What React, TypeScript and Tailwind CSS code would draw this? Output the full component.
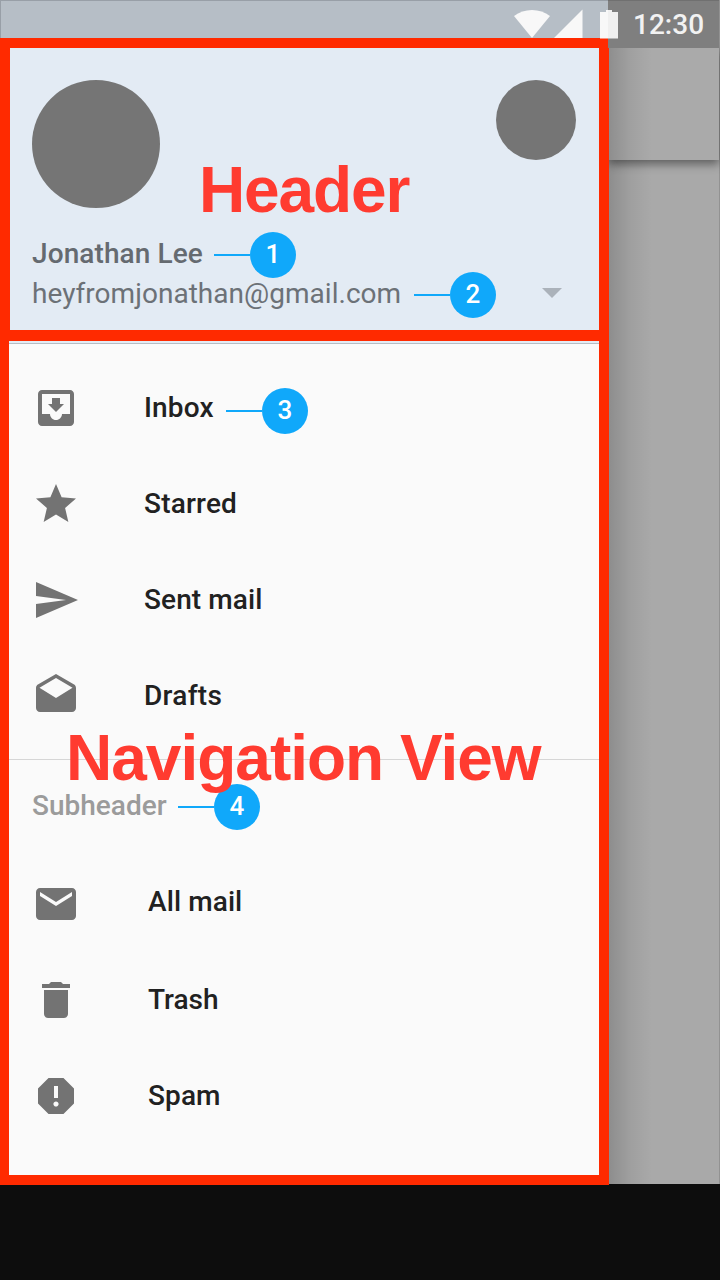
import React from "react";

const ICONS = {
  inbox:
    "M19 3H4.99c-1.11 0-1.98.9-1.98 2L3 19c0 1.1.88 2 1.99 2H19c1.1 0 2-.9 2-2V5c0-1.1-.9-2-2-2zm0 12h-4c0 1.66-1.35 3-3 3s-3-1.34-3-3H4.99V5H19v10zm-3-5h-2V7h-4v3H8l4 4 4-4z",
  star: "M12 17.27L18.18 21l-1.64-7.03L22 9.24l-7.19-.61L12 2 9.19 8.63 2 9.24l5.46 4.73L5.82 21z",
  send: "M2.01 21L23 12 2.01 3 2 10l15 2-15 2z",
  drafts:
    "M21.99 8c0-.72-.37-1.35-.94-1.7L12 1 2.95 6.3C2.38 6.65 2 7.28 2 8v10c0 1.1.9 2 2 2h16c1.1 0 2-.9 2-2l-.01-10zM12 13L3.74 7.84 12 3l8.26 4.84L12 13z",
  mail: "M20 4H4c-1.1 0-1.99.9-1.99 2L2 18c0 1.1.9 2 2 2h16c1.1 0 2-.9 2-2V6c0-1.1-.9-2-2-2zm0 4l-8 5-8-5V6l8 5 8-5v2z",
  trash: "M6 19c0 1.1.9 2 2 2h8c1.1 0 2-.9 2-2V7H6v12zM19 4h-3.5l-1-1h-5l-1 1H5v2h14V4z",
  spam: "M15.73 3H8.27L3 8.27v7.46L8.27 21h7.46L21 15.73V8.27L15.73 3zM12 17.3c-.72 0-1.3-.58-1.3-1.3s.58-1.3 1.3-1.3 1.3.58 1.3 1.3-.58 1.3-1.3 1.3zm1-4.3h-2V7h2v6z",
};

type IconName = keyof typeof ICONS;

function Icon({ name }: { name: IconName }) {
  return (
    <svg className="h-12 w-12 shrink-0 fill-[#737373]" viewBox="0 0 24 24">
      <path d={ICONS[name]} />
    </svg>
  );
}

function Callout({ n, className }: { n: number; className: string }) {
  return (
    <div className={`absolute flex h-[46px] items-center ${className}`}>
      <div className="h-0.5 w-9 bg-[#10a8fa]" />
      <div className="mb-px flex h-[46px] w-[46px] shrink-0 items-center justify-center rounded-full bg-[#10a8fa] pb-px text-[26px] leading-none font-medium text-white">
        {n}
      </div>
    </div>
  );
}

function Item({ icon, label, className, callout }: { icon: IconName; label: string; className: string; callout?: React.ReactNode }) {
  return (
    <li className="relative flex h-24 items-center pl-8">
      <Icon name={icon} />
      <span className={`text-[28px] leading-8 font-medium text-[#212121] ${className}`}>{label}</span>
      {callout}
    </li>
  );
}

function StatusIcons() {
  return (
    <svg className="absolute top-0 left-[508px] z-20 h-12 w-[120px]" viewBox="508 0 120 48">
      <path d="M532 38L514 16C524 8 540 8 550 16Z" fill="#f8f8f8" />
      <path d="M554 38H582.500V9.500Z" fill="#f8f8f8" />
      <path d="M600 12H606V10H608V38.500H600Z" fill="#f8f8f8" />
      <path d="M608 10H612V12H618V38.500H608Z" fill="#f0f0f0" />
    </svg>
  );
}

export default function App() {
  return (
    <div className="relative flex h-[1280px] w-[720px] flex-col overflow-hidden bg-[#0d0d0d] font-['Roboto',sans-serif]">
      <div className="flex h-[1184px]">
        <aside className="flex w-[608px] flex-col bg-[#fafafa]">
          <div className="h-12 shrink-0 border-t border-l border-[#989fa7] bg-[#b6bec6]" />
          <header className="relative h-[296px] shrink-0 border-b border-[#b6bdc4] bg-[#e3ebf4] px-8 pt-8">
            <div className="flex items-start justify-between">
              <div className="h-32 w-32 rounded-full bg-[#757575]" />
              <div className="h-20 w-20 rounded-full bg-[#757575]" />
            </div>
            <div className="mt-[26px] text-[28px] leading-10 font-medium tracking-[0.1px] text-[#656a70]">Jonathan Lee</div>
            <div className="flex items-center justify-between pr-3.5">
              <span className="text-[28px] leading-10 tracking-[0.03px] text-[#6c7177]">heyfromjonathan@gmail.com</span>
              <svg className="mb-0.5 h-2.5 w-5 fill-[#abb2ba]" viewBox="0 0 20 10">
                <path d="M0 0H20L10 10Z" />
              </svg>
            </div>
            <Callout n={1} className="top-[184px] left-[214px]" />
            <Callout n={2} className="top-[224px] left-[414px]" />
          </header>
          <nav>
            <ul className="pt-4">
              <Item
                icon="inbox"
                label="Inbox"
                className="ml-16 tracking-[0.15px]"
                callout={<Callout n={3} className="top-[28px] left-[226px]" />}
              />
              <Item icon="star" label="Starred" className="ml-16 tracking-[0.2px]" />
              <Item icon="send" label="Sent mail" className="ml-16 tracking-[0.1px]" />
              <Item icon="drafts" label="Drafts" className="ml-16 tracking-[0.3px]" />
            </ul>
            <div className="relative mt-[15px] h-[97px] border-t border-[#d6d6d6] pt-[26px] pl-8 text-[28px] leading-10 font-medium text-[#9b9b9b]">
              Subheader
              <Callout n={4} className="top-[24px] left-[178px]" />
            </div>
            <ul>
              <Item icon="mail" label="All mail" className="ml-[68px] pb-1 tracking-[0.1px]" />
              <Item icon="trash" label="Trash" className="ml-[68px]" />
              <Item icon="spam" label="Spam" className="ml-[68px] tracking-[0.1px]" />
            </ul>
          </nav>
        </aside>
        <main className="relative flex w-28 flex-col border-r border-[#929292] bg-[#a9a9a9]">
          <div className="z-10 flex h-12 shrink-0 items-center border-t border-[#707070] bg-[#7f7f7f] pl-[25px] text-[28px] leading-none font-medium text-[#f2f2f2]">
            12:30
          </div>
          <div className="h-28 shrink-0 bg-[#aaaaaa] shadow-[0_4px_9px_rgba(0,0,0,0.45)]" />
          <div className="absolute top-12 bottom-0 left-0 w-11 bg-linear-to-r from-black/17 via-black/6 to-transparent" />
        </main>
      </div>
      <StatusIcons />
      <div className="absolute top-[38px] left-0 h-[303px] w-[609px] border-[10px] border-b-[11px] border-[#ff2a00]" />
      <div className="absolute top-[330px] left-0 h-[855px] w-[609px] border-[10px] border-t-[11px] border-l-[9px] border-[#ff2a00]" />
      <div className="absolute top-[162px] left-[199px] font-['Liberation_Sans',sans-serif] text-[64px] leading-[56px] font-bold tracking-[-1.1px] whitespace-nowrap text-[#ff3b30]">
        Header
      </div>
      <div className="absolute top-[730px] left-[66px] font-['Liberation_Sans',sans-serif] text-[64px] leading-[56px] font-bold tracking-[-1px] whitespace-nowrap text-[#ff3b30]">
        Navigation View
      </div>
    </div>
  );
}
